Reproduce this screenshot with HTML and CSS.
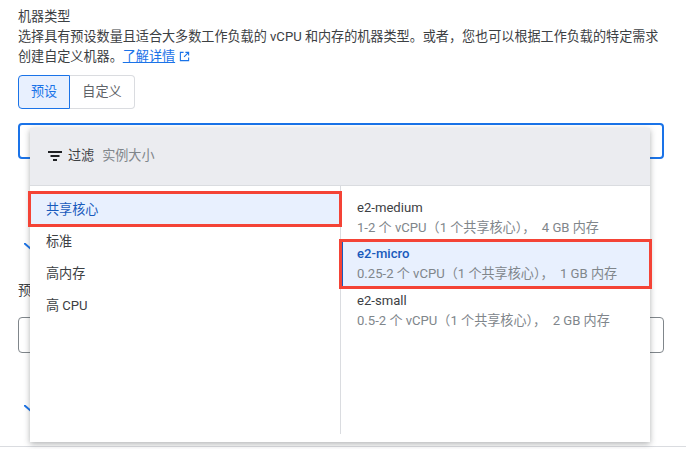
FILE: index.html
```html
<!DOCTYPE html>
<html lang="zh-CN">
<head>
  <meta charset="UTF-8" />
  <title>机器类型</title>
  <link rel="stylesheet" href="styles.css">
</head>
<body>
  <div class="page">
    <div class="field-label">机器类型</div>
    <p class="desc">选择具有预设数量且适合大多数工作负载的 vCPU 和内存的机器类型。或者，您也可以根据工作负载的特定需求创建自定义机器。<a class="learn" href="#">了解详情</a>
      <svg class="ext" viewBox="0 0 12 12" width="11" height="11"><path d="M5 1.500H1.500v9h9V7M7 1.500h3.500V5M10.500 1.500L5.500 6.500" fill="none" stroke="#1a73e8" stroke-width="1.200"/></svg>
    </p>

    <div class="toggle">
      <div class="toggle-btn selected">预设</div>
      <div class="toggle-btn">自定义</div>
    </div>

    <div class="select-box focused"></div>
    <div class="chevron-row first"><svg width="8" height="8" viewBox="0 0 8 8"><path d="M0 0L7 6" stroke="#1a73e8" stroke-width="2"/></svg></div>
    <div class="field-label second">预设</div>
    <div class="select-box"></div>
    <div class="chevron-row second-row"><svg width="8" height="8" viewBox="0 0 8 8"><path d="M0 0L7 6" stroke="#1a73e8" stroke-width="2"/></svg></div>
  </div>
  <div class="bottom-line"></div>

  <div class="dropdown">
    <div class="filter-bar">
      <svg class="filter-icon" viewBox="0 0 14 10" width="14" height="10"><path d="M0 0h14v2H0zM2.500 4h9v2h-9zM5 8h4v2H5z" fill="#202124"/></svg>
      <span class="filter-word">过滤</span>
      <span class="filter-hint">实例大小</span>
    </div>
    <div class="panes">
      <div class="families">
        <div class="family active">共享核心</div>
        <div class="family">标准</div>
        <div class="family">高内存</div>
        <div class="family">高 CPU</div>
      </div>
      <div class="types">
        <div class="type">
          <div class="type-name">e2-medium</div>
          <div class="type-info">1-2 个 vCPU（1 个共享核心），&nbsp; 4 GB 内存</div>
        </div>
        <div class="type active">
          <div class="type-name">e2-micro</div>
          <div class="type-info">0.25-2 个 vCPU（1 个共享核心），&nbsp; 1 GB 内存</div>
        </div>
        <div class="type">
          <div class="type-name">e2-small</div>
          <div class="type-info">0.5-2 个 vCPU（1 个共享核心），&nbsp; 2 GB 内存</div>
        </div>
      </div>
    </div>
  </div>
</body>
</html>
```

FILE: styles.css
```css
* {
  box-sizing: border-box;
}

body {
  margin: 0;
  height: 449px;
  overflow: hidden;
  position: relative;
  background: #fff;
  color: #3c4043;
  font-family: Roboto, "Noto Sans CJK SC", sans-serif;
  font-size: 13.1px;
  line-height: 20px;
}

.page {
  padding: 7px 22px 0 18px;
}

.field-label {
  color: #3c4043;
}

.desc {
  margin: 0;
  color: #3c4043;
}

.learn {
  color: #1a73e8;
  text-decoration: underline;
}

.ext {
  vertical-align: -1px;
  margin-left: 1px;
}

.toggle {
  display: flex;
  width: 117px;
  height: 34px;
  margin-top: 8px;
}

.toggle-btn {
  flex: 1;
  display: flex;
  align-items: center;
  justify-content: center;
  border: 1px solid #dadce0;
  border-left: none;
  border-radius: 0 4px 4px 0;
  color: #5f6368;
}

.toggle-btn.selected {
  flex: 0 0 52px;
  background: #e8f0fe;
  border: 1px solid #1a73e8;
  border-radius: 4px 0 0 4px;
  color: #1a73e8;
}

.select-box {
  height: 36px;
  border: 1px solid #80868b;
  border-radius: 4px;
}

.select-box.focused {
  margin-top: 14px;
  border: 2px solid #1a73e8;
}

.chevron-row {
  height: 8px;
  line-height: 0;
  padding-left: 6px;
}

.chevron-row.first {
  margin-top: 84px;
}

.field-label.second {
  margin-top: 30px;
}

.field-label.second + .select-box {
  margin-top: 16px;
}

.chevron-row.second-row {
  margin-top: 52px;
}

.bottom-line {
  position: absolute;
  left: 0;
  right: 0;
  top: 446px;
  height: 1px;
  background: #dadce0;
}

.dropdown {
  position: absolute;
  left: 30px;
  top: 128px;
  width: 620px;
  height: 314px;
  background: #fff;
  box-shadow: 0 2px 6px rgba(60, 64, 67, 0.4);
}

.filter-bar {
  display: flex;
  align-items: center;
  height: 58px;
  padding: 0 0 2px 18px;
  background: #ebecf0;
  border-bottom: 1px solid #dadce0;
}

.filter-icon {
  margin-right: 6px;
}

.filter-word {
  margin-right: 8px;
  color: #3c4043;
}

.filter-hint {
  color: #80868b;
}

.panes {
  display: flex;
  height: 248px;
}

.families {
  width: 311px;
  padding-top: 7px;
  border-right: 1px solid #dadce0;
}

.family {
  height: 32px;
  padding-left: 16px;
  line-height: 33px;
}

.family.active {
  background: #e8f0fe;
  color: #185abc;
  outline: 3px solid #f44336;
  outline-offset: -1px;
}

.types {
  flex: 1;
  padding-top: 9px;
}

.type {
  height: 46px;
  padding: 3px 16px 0 16px;
  line-height: 20px;
}

.type-info {
  color: #80868b;
  line-height: 19px;
}

.type.active {
  margin-bottom: 1px;
  background: #e8f0fe;
  border-left: 2px solid #185abc;
  padding-left: 14px;
  outline: 3px solid #f44336;
  outline-offset: -1px;
}

.type.active .type-name {
  color: #185abc;
  font-weight: 500;
}
```
